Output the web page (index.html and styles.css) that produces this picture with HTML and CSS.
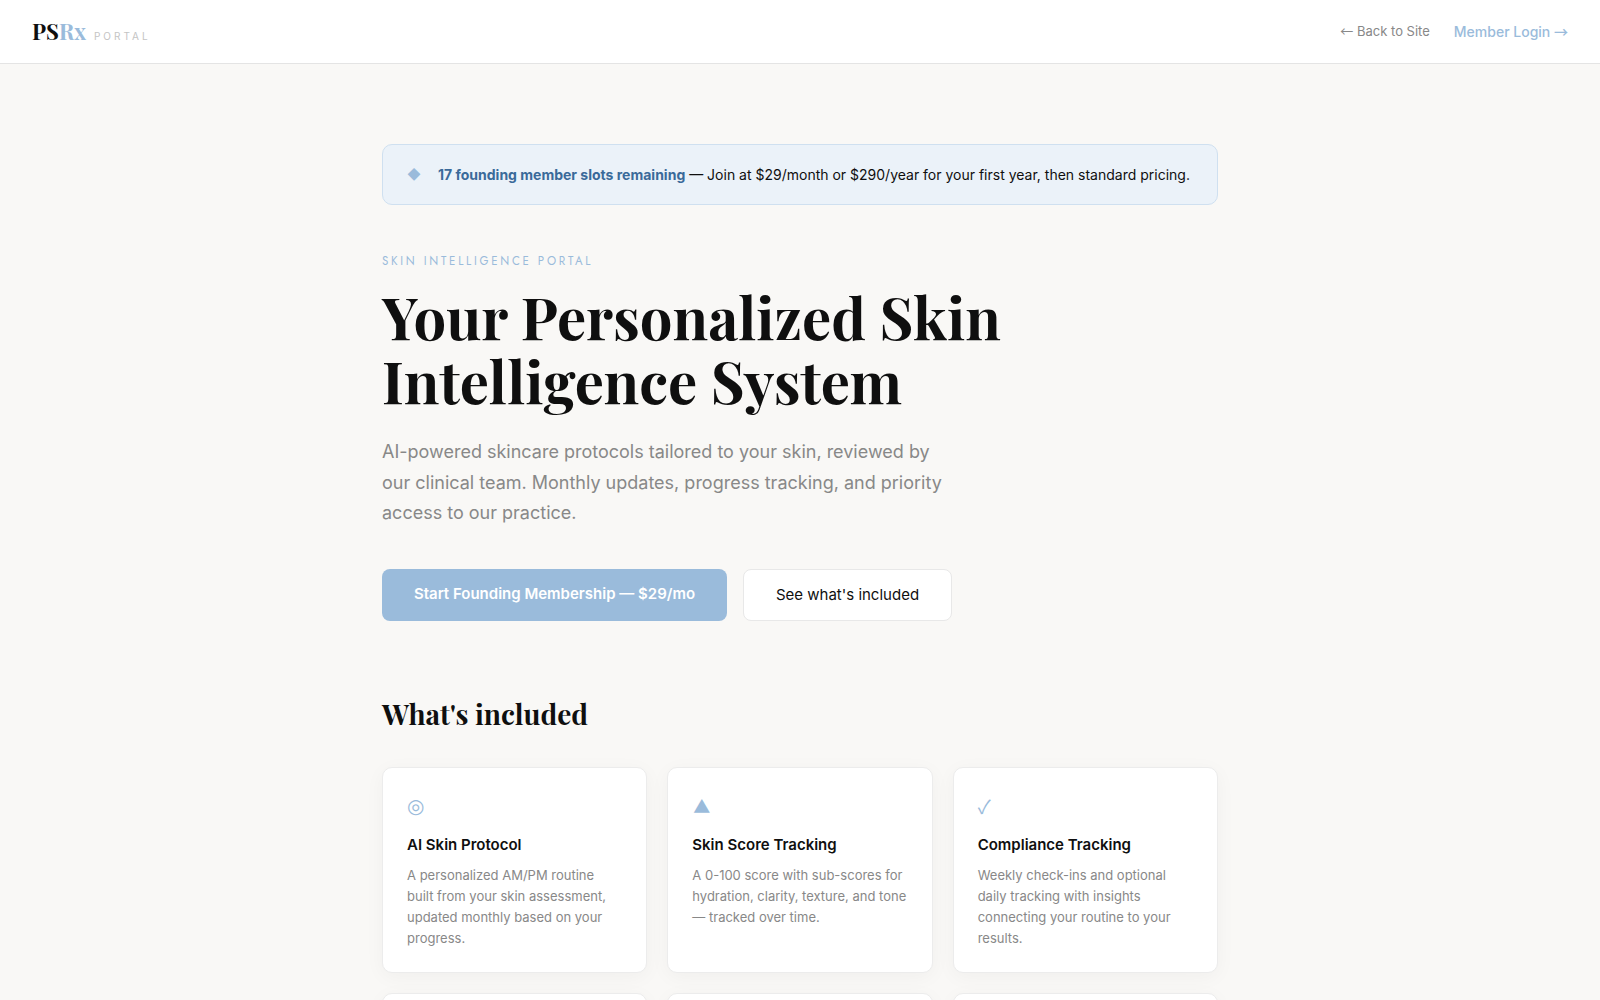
FILE: index.html
```html
<!DOCTYPE html>
<html lang="en">
<head>
<meta charset="utf-8">
<title>PSRx Portal</title>
<link rel="stylesheet" href="styles.css">
</head>
<body>
<header class="topbar">
  <a class="logo" href="#"><span class="logo-ps">PS</span><span class="logo-rx">Rx</span><span class="logo-sub">PORTAL</span></a>
  <nav class="topnav">
    <a class="nav-back" href="#"><span class="sym">←</span> Back to Site</a>
    <a class="nav-login" href="#">Member Login <span class="sym">→</span></a>
  </nav>
</header>
<main class="page">
  <div class="banner">
    <span class="banner-icon sym">◆</span>
    <p class="banner-text"><strong>17 founding member slots remaining</strong> — Join at $29/month or $290/year for your first year, then standard pricing.</p>
  </div>
  <p class="eyebrow">SKIN INTELLIGENCE PORTAL</p>
  <h1 class="hero-title">Your Personalized Skin Intelligence System</h1>
  <p class="lead">AI-powered skincare protocols tailored to your skin, reviewed by our clinical team. Monthly updates, progress tracking, and priority access to our practice.</p>
  <div class="actions">
    <a class="btn btn-primary" href="#">Start Founding Membership — $29/mo</a>
    <a class="btn btn-secondary" href="#">See what's included</a>
  </div>
  <h2 class="section-title">What's included</h2>
  <div class="cards">
    <article class="card">
      <div class="card-icon icon-ring">◎</div>
      <h3 class="card-title">AI Skin Protocol</h3>
      <p class="card-text">A personalized AM/PM routine built from your skin assessment, updated monthly based on your progress.</p>
    </article>
    <article class="card">
      <div class="card-icon icon-tri">▲</div>
      <h3 class="card-title">Skin Score Tracking</h3>
      <p class="card-text">A 0-100 score with sub-scores for hydration, clarity, texture, and tone — tracked over time.</p>
    </article>
    <article class="card">
      <div class="card-icon icon-check">✓</div>
      <h3 class="card-title">Compliance Tracking</h3>
      <p class="card-text">Weekly check-ins and optional daily tracking with insights connecting your routine to your results.</p>
    </article>
    <article class="card"><div class="card-icon sym">◇</div></article>
    <article class="card"><div class="card-icon sym">◇</div></article>
    <article class="card"><div class="card-icon sym">◇</div></article>
  </div>
</main>
</body>
</html>
```
FILE: styles.css
```css
* { box-sizing: border-box; }
html, body { margin: 0; padding: 0; }
body {
  background: #f9f8f6;
  color: #0f0f0f;
  font-family: Inter, "Liberation Sans", sans-serif;
}
a { text-decoration: none; color: inherit; }
.sym { font-family: "Noto Sans CJK JP", "Noto Sans CJK SC", sans-serif; }
.topbar {
  height: 64px;
  background: #fff;
  border-bottom: 1px solid #e4e4e4;
  padding: 0 32px 2px;
  display: flex;
  align-items: center;
  justify-content: space-between;
}
.logo { display: flex; align-items: baseline; font-family: "Playfair Display", "Liberation Serif", serif; font-weight: 700; font-size: 22px; }
.logo-ps { color: #0f0f0f; }
.logo-rx { color: #9abbdb; }
.logo-sub {
  margin-left: 8px;
  font-family: Inter, "Liberation Sans", sans-serif;
  font-weight: 400;
  font-size: 10px;
  letter-spacing: 3px;
  color: #c4c4c4;
}
.topnav { display: flex; align-items: center; gap: 24px; }
.nav-back { font-size: 13px; color: #888; }
.nav-login { font-size: 14px; font-weight: 500; color: #9abbdb; }
.page { width: 836px; margin: 0 auto; padding-top: 80px; }
.banner {
  display: flex;
  align-items: center;
  gap: 17px;
  height: 61px;
  padding: 0 24px;
  background: #ebf2f9;
  border: 1px solid #cfe0f0;
  border-radius: 10px;
  margin-bottom: 48px;
}
.banner-icon { color: #9abbdb; font-size: 13px; line-height: 1; width: 14px; padding-bottom: 2px; text-align: center; }
.banner-text { margin: 0; font-size: 14px; line-height: 1.5; color: #0f0f0f; white-space: nowrap; }
.banner-text strong { color: #3a6a9a; font-weight: 700; }
.eyebrow {
  margin: 0 0 15px;
  font-family: Jost, Inter, "Liberation Sans", sans-serif;
  font-size: 11.5px;
  letter-spacing: 2.75px;
  color: #9abbdb;
  line-height: 16px;
}
.hero-title {
  margin: 0 0 25px;
  max-width: 680px;
  font-family: "Playfair Display", "Liberation Serif", serif;
  font-weight: 700;
  font-size: 58px;
  line-height: 64px;
  color: #0f0f0f;
}
.lead {
  margin: 0 0 40px;
  max-width: 580px;
  font-size: 18px;
  line-height: 1.7;
  color: #888;
}
.actions { display: flex; gap: 16px; align-items: stretch; margin-bottom: 73px; }
.btn { display: flex; align-items: center; justify-content: center; height: 52px; border-radius: 8px; font-size: 15px; }
.btn-primary { width: 345px; padding-bottom: 2px; background: #9abbdb; color: #fff; font-weight: 600; }
.btn-secondary { width: 209px; background: #fff; border: 1px solid #e8e8e8; color: #0f0f0f; }
.section-title {
  margin: 0 0 34px;
  font-family: "Playfair Display", "Liberation Serif", serif;
  font-weight: 700;
  font-size: 28px;
  line-height: 1.4;
  color: #0f0f0f;
}
.cards { display: grid; grid-template-columns: repeat(3, 1fr); gap: 20px; padding-bottom: 60px; }
.card {
  background: #fff;
  border: 1px solid #ececec;
  border-radius: 10px;
  padding: 24px 24px 23px;
  box-shadow: 0 4px 20px rgba(0, 0, 0, 0.04);
}
.card-icon { font-size: 18px; line-height: 28px; color: #9abbdb; margin-bottom: 15px; }
.icon-ring { font-family: "DejaVu Sans", sans-serif; font-size: 20px; }
.icon-tri { font-family: "Noto Sans CJK JP", sans-serif; font-size: 17px; padding-left: 1px; }
.icon-check { font-family: "Noto Sans CJK JP", sans-serif; font-size: 19px; }
.card-title { margin: 0 0 11px; font-size: 15px; font-weight: 600; line-height: 1.3; color: #0f0f0f; }
.card-text { margin: 0; font-size: 13px; line-height: 1.6; color: #888; }
```
